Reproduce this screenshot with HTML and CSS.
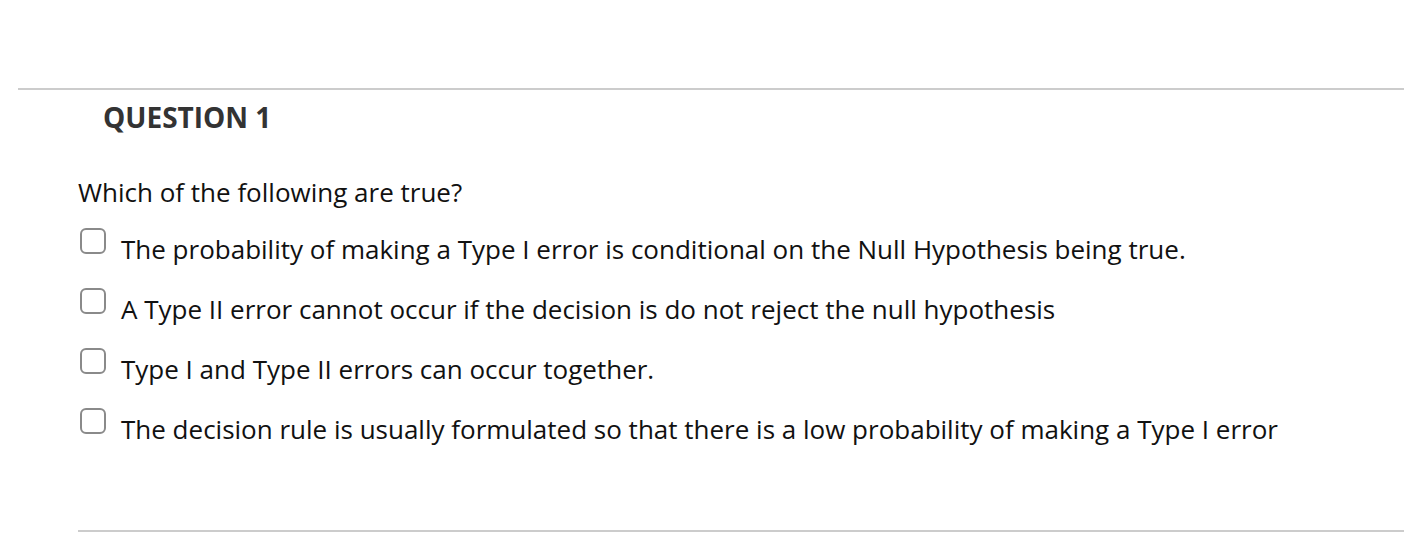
FILE: index.html
```html
<!DOCTYPE html>
<html lang="en">
<head>
<meta charset="utf-8">
<title>Question 1</title>
<link rel="stylesheet" href="styles.css">
</head>
<body>
<div class="page">
  <hr class="rule rule-top">
  <section class="question">
    <h2 class="q-title">QUESTION 1</h2>
    <p class="q-text">Which of the following are true?</p>
    <ul class="options">
      <li class="option"><span class="box"></span><span class="label">The probability of making a Type I error is conditional on the Null Hypothesis being true.</span></li>
      <li class="option"><span class="box"></span><span class="label">A Type II error cannot occur if the decision is do not reject the null hypothesis</span></li>
      <li class="option"><span class="box"></span><span class="label">Type I and Type II errors can occur together.</span></li>
      <li class="option"><span class="box"></span><span class="label">The decision rule is usually formulated so that there is a low probability of making a Type I error</span></li>
    </ul>
    <hr class="rule rule-bottom">
  </section>
</div>
</body>
</html>
```

FILE: styles.css
```css
html, body {
  margin: 0;
  padding: 0;
  background: #ffffff;
}

body {
  font-family: "Open Sans", "Noto Sans", sans-serif;
  color: #111111;
}

.page {
  padding-top: 88px;
}

.rule {
  border: 0;
  border-top: 2px solid #cccccc;
  margin: 0;
  height: 0;
}

.rule-top {
  margin-left: 18px;
}

.question {
  padding-left: 78px;
}

.q-title {
  margin: 8px 0 0 25px;
  font-size: 28px;
  line-height: 38px;
  font-weight: 700;
  color: #333333;
}

.q-text {
  margin: 39px 0 0 0;
  font-size: 26px;
  line-height: 34px;
}

.options {
  list-style: none;
  margin: 23px 0 0 0;
  padding: 0;
  display: flex;
  flex-direction: column;
  gap: 26px;
}

.option {
  display: flex;
  align-items: flex-start;
  gap: 15px;
  font-size: 26px;
  line-height: 34px;
}

.box {
  flex: none;
  box-sizing: border-box;
  width: 26px;
  height: 26px;
  margin-top: -4px;
  margin-left: 2px;
  border: 2px solid #8a8a8a;
  border-radius: 6px;
  background: #ffffff;
}

.rule-bottom {
  margin-top: 84px;
}
```
